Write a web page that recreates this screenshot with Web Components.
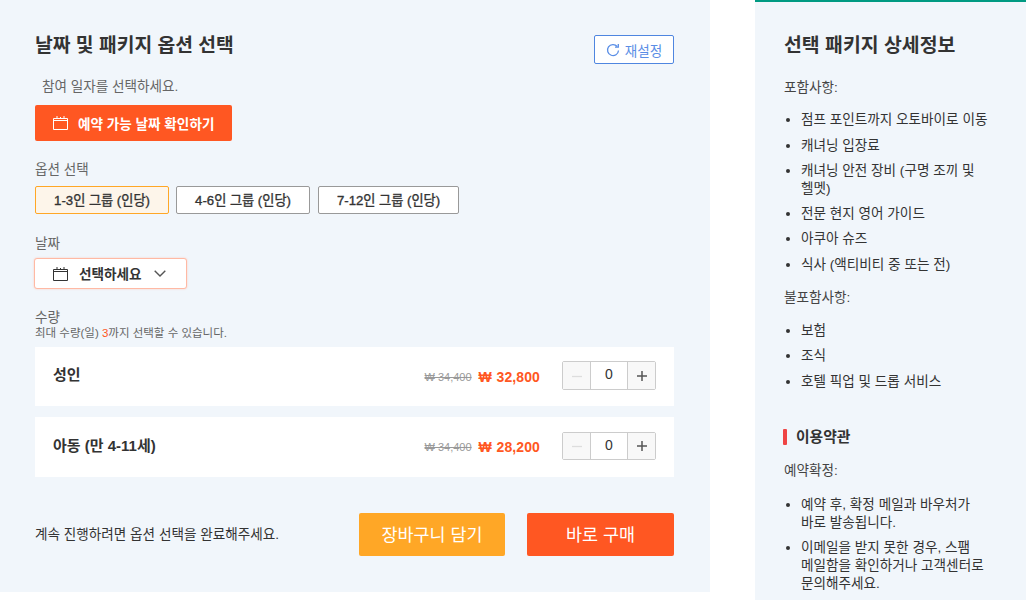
<!DOCTYPE html>
<html lang="ko"><head><meta charset="utf-8"><title>패키지</title>
<style>
html,body{margin:0;padding:0;background:#fff;overflow:hidden;height:600px}
body{font-family:"Liberation Sans","Noto Sans CJK KR",sans-serif;color:#333}
</style></head><body>
<booking-page></booking-page>
<script>
const CAL=(c)=>`<svg width="15" height="14" viewBox="0 0 15 14" fill="none" stroke="${c}" stroke-width="1"><path d="M.5 2.500h14v11H.5z" stroke-dasharray="none"/><path d="M.5 4.500h14" /><path d="M4 0v3M7.500 1v1.500M11 0v3"/></svg>`;
function def(name,css,html){
  customElements.define(name,class extends HTMLElement{
    constructor(){super();this.attachShadow({mode:'open'}).innerHTML=`<style>${css}</style>`+(typeof html==='function'?html(this):html);}
  });
}
def('qty-stepper',`:host{display:flex;width:94px;height:var(--sh,29px);border:1px solid #ccc;border-radius:2px;box-sizing:border-box;background:#fff;font-size:14px;color:#333;margin-top:-2px}
 .b{width:27px;background:#f8f8f8;display:flex;align-items:center;justify-content:center}
 .m{flex:1;border-left:1px solid #ccc;border-right:1px solid #ccc;display:flex;align-items:center;justify-content:center;padding-bottom:3px;box-sizing:border-box}`,
 `<div class="b"><svg width="12" height="12" viewBox="0 0 12 12"><path d="M1 6.500h10" stroke="#ddd" stroke-width="1.300"/></svg></div><div class="m">0</div><div class="b"><svg width="12" height="12" viewBox="0 0 12 12"><path d="M1 6h10M6 1v10" stroke="#555" stroke-width="1.500"/></svg></div>`);
def('price-row',`:host{display:flex;align-items:center;background:#fff;padding:0 18px;box-sizing:border-box;height:var(--h,59px)}
 .n{flex:1;font-size:15px;font-weight:700;color:#333;margin-top:var(--nm,-7px)}
 .o{font-size:11px;color:#999;text-decoration:line-through;margin-right:7px}
 .p{font-size:14px;font-weight:700;color:#ff5722;letter-spacing:.1px;margin-right:22px}
 .p i{font-style:normal;display:inline-block;width:18px}`,
 (e)=>`<div class="n"><slot></slot></div><div class="o">₩ 34,400</div><div class="p"><i>₩</i>${e.getAttribute('price')}</div><qty-stepper></qty-stepper>`);
def('opt-btn',`:host{display:flex;align-items:center;justify-content:center;box-sizing:border-box;width:134px;height:28px;padding-bottom:2px;border:1px solid #999;border-radius:2px;background:#fff;font-size:13.200px;font-weight:400;color:#333;-webkit-text-stroke:.35px #333}
 :host([on]){border-color:#ffa726;background:#fdf5ea}`,`<slot></slot>`);
def('booking-form',`:host{display:block;width:710px;height:592px;background:#f1f6fb;box-sizing:border-box;padding:31px 36px 0 35px}
 .head{display:flex;justify-content:space-between;height:44px}
 h2{margin:0;padding-top:2px;font-size:19.300px;line-height:26px;font-weight:700;color:#333}
 .reset{display:flex;align-items:center;justify-content:center;gap:5px;width:80px;height:29px;margin-top:4px;box-sizing:border-box;border:1px solid #4f86e0;border-radius:2px;background:#fff;color:#5a8ee6;font-size:13.600px}
 .hint{font-size:13.600px;line-height:18px;color:#666;padding-left:7px;margin-top:3px}
 .cta{display:flex;align-items:center;gap:10px;width:197px;height:36px;margin-top:9px;padding-left:18px;padding-bottom:1px;box-sizing:border-box;background:#ff5722;border-radius:2px;color:#fff;font-size:13.600px;font-weight:700}
 .lab{font-size:13.600px;line-height:18px;color:#666}
 .opts{display:flex;gap:7px;margin-top:7px}
 .sel{display:flex;align-items:center;margin-top:5px;width:153px;height:31px;box-sizing:border-box;margin-left:-1px;padding-left:18px;background:#fff;border:1px solid #ffb9a4;border-radius:3px;box-shadow:0 0 2px #ffc9b8;font-size:13.600px;font-weight:700;color:#333}
 .small{font-size:11.500px;line-height:14px;color:#666}.small b{font-weight:400;color:#ff5722}
 .foot{display:flex;align-items:center;margin-top:36px;font-size:13.600px;color:#333}
 .foot span{flex:1;margin-top:-3px}
 .big{display:flex;align-items:center;justify-content:center;height:43px;width:146px;padding-bottom:2px;box-sizing:border-box;border-radius:2px;color:#fff;font-size:17.400px;margin-left:22px}`,
 `<div class="head"><h2>날짜 및 패키지 옵션 선택</h2><div class="reset"><svg width="14" height="14" viewBox="0 0 14 14" fill="none" stroke="#5a8ee6" stroke-width="1.300"><path d="M11.200 3.500A5.500 5.500 0 1 0 12.500 7.500"/><path d="M12.300 1v3.200H9"/></svg>재설정</div></div>
 <div class="hint">참여 일자를 선택하세요.</div>
 <div class="cta">${CAL('#fff')}<span>예약 가능 날짜 확인하기</span></div>
 <div class="lab" style="margin-top:20px">옵션 선택</div>
 <div class="opts"><opt-btn on>1-3인 그룹 (인당)</opt-btn><opt-btn>4-6인 그룹 (인당)</opt-btn><opt-btn style="width:141px;margin-left:1px">7-12인 그룹 (인당)</opt-btn></div>
 <div class="lab" style="margin-top:21px">날짜</div>
 <div class="sel">${CAL('#333')}<span style="margin-left:11px;margin-bottom:2px">선택하세요</span><svg style="margin-left:12px" width="12" height="7" viewBox="0 0 12 7" fill="none" stroke="#555" stroke-width="1.400"><path d="M.7.700 6 6l5.300-5.300"/></svg></div>
 <div class="lab" style="margin-top:20px;line-height:17px">수량</div>
 <div class="small">최대 수량(일) <b>3</b>까지 선택할 수 있습니다.</div>
 <price-row price="32,800" style="margin-top:7px">성인</price-row>
 <price-row price="28,200" style="margin-top:11px;--h:60px;--sh:28px;--nm:-5px">아동 (만 4-11세)</price-row>
 <div class="foot"><span>계속 진행하려면 옵션 선택을 완료해주세요.</span><div class="big" style="background:#ffa726">장바구니 담기</div><div class="big" style="background:#ff5722;width:147px">바로 구매</div></div>`);
def('package-info',`:host{display:block;width:271px;height:600px;background:#f1f6fb;border-top:2px solid #009a82;box-sizing:border-box;padding:30px 35px 0 29px;overflow:hidden;font-size:13.600px;color:#333;word-break:keep-all}
 h2{margin:0;font-size:19.400px;line-height:26px;font-weight:700}
 p{margin:0;line-height:18.300px;color:#444}
 ul{margin:14px 0 15px;padding:0 0 0 17px}
 li{line-height:18px;margin-bottom:7.300px}
 h3{display:flex;align-items:center;gap:9px;margin:37px 0 0 -1px;font-size:14.800px;line-height:18px;font-weight:700}
 h3 i{display:block;width:4px;height:16px;background:#ef4444;border-radius:1px}`,
 `<h2>선택 패키지 상세정보</h2>
 <p style="margin-top:21px">포함사항:</p>
 <ul><li>점프 포인트까지 오토바이로 이동</li><li>캐녀닝 입장료</li><li>캐녀닝 안전 장비 (구명 조끼 및 헬멧)</li><li>전문 현지 영어 가이드</li><li>아쿠아 슈즈</li><li>식사 (액티비티 중 또는 전)</li></ul>
 <p>불포함사항:</p>
 <ul style="margin-top:15px"><li>보험</li><li>조식</li><li>호텔 픽업 및 드롭 서비스</li></ul>
 <h3><i></i>이용약관</h3>
 <p style="margin-top:16px">예약확정:</p>
 <ul style="margin-top:16px"><li>예약 후, 확정 메일과 바우처가 바로 발송됩니다.</li><li>이메일을 받지 못한 경우, 스팸 메일함을 확인하거나 고객센터로 문의해주세요.</li></ul>`);
def('booking-page',`:host{display:flex;gap:45px;width:1026px;height:600px;align-items:flex-start}`,`<booking-form></booking-form><package-info></package-info>`);
</script></body></html>
